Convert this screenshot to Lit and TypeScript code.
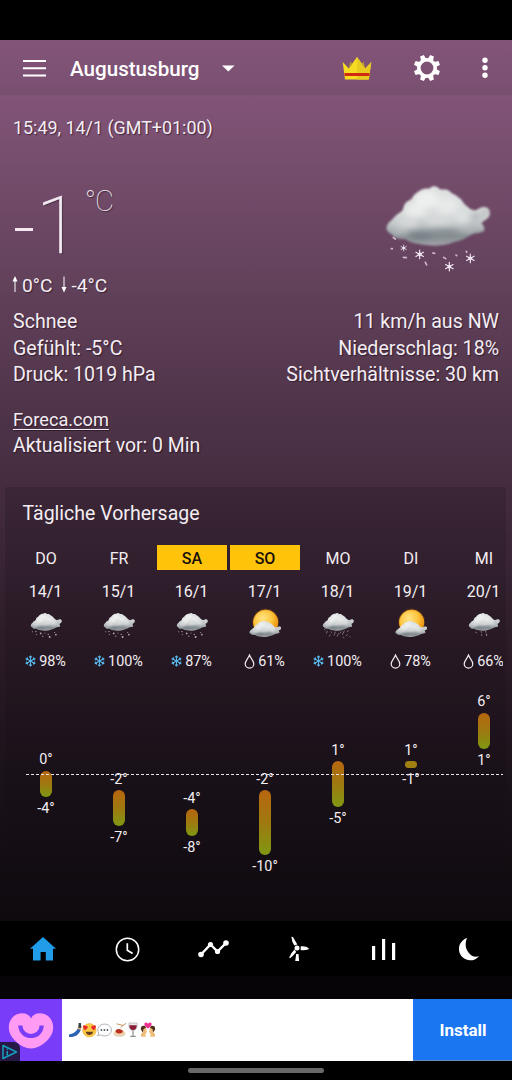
import { LitElement, html, css, svg } from "lit";
import { customElement, property } from "lit/decorators.js";

type Sky = "snow" | "rain" | "sun" | "sleet";
interface Day {
  name: string;
  date: string;
  sky: Sky;
  wet: "flake" | "drop";
  chance: number;
  high: number;
  low: number;
  weekend?: boolean;
}

const DAYS: Day[] = [
  { name: "DO", date: "14/1", sky: "snow", wet: "flake", chance: 98, high: 0, low: -4 },
  { name: "FR", date: "15/1", sky: "snow", wet: "flake", chance: 100, high: -2, low: -7 },
  { name: "SA", date: "16/1", sky: "snow", wet: "flake", chance: 87, high: -4, low: -8, weekend: true },
  { name: "SO", date: "17/1", sky: "sun", wet: "drop", chance: 61, high: -2, low: -10, weekend: true },
  { name: "MO", date: "18/1", sky: "sleet", wet: "flake", chance: 100, high: 1, low: -5 },
  { name: "DI", date: "19/1", sky: "sun", wet: "drop", chance: 78, high: 1, low: -1 },
  { name: "MI", date: "20/1", sky: "rain", wet: "drop", chance: 66, high: 6, low: 1 },
];

const PX_PER_DEGREE = 9.65;

const flake = (x: number, y: number, r: number) => svg`
  <g transform="translate(${x} ${y})" stroke="#f3e6f3" stroke-width=${r * 0.26} stroke-linecap="round">
    ${[0, 60, 120].map(
      (a) => svg`<path transform="rotate(${a})" d="M0 ${-r}V${r}" fill="none"/>`
    )}
    <circle r=${r * 0.42} fill="#f3e6f3" stroke="none"/>
  </g>`;

@customElement("sky-icon")
export class SkyIcon extends LitElement {
  @property() sky: Sky = "snow";
  @property({ type: Boolean }) small = false;

  static styles = css`
    :host { display: block; }
    svg { display: block; width: 100%; height: 100%; overflow: visible; }
  `;

  cloud() {
    const d =
      "M48 172C52 158 62 154 68 146C74 136 84 131 92 126C98 122 98 112 102 104C108 94 118 94 124 86C130 74 140 68 150 62C158 54 170 60 180 54C188 46 200 50 207 58C214 62 226 56 236 64C244 74 256 74 264 84C274 88 276 98 284 106C292 112 298 120 310 122C320 122 326 114 338 112C350 110 360 120 357 134C357 146 342 152 332 160C338 166 344 176 340 184C330 192 312 188 300 196C286 206 268 214 248 218C224 228 196 230 168 226C142 224 120 220 104 208C86 208 66 206 64 194C54 190 46 182 48 172Z";
    return svg`
      <defs>
        <linearGradient id="body" x1="0" y1="0" x2="0" y2="1">
          <stop offset="0" stop-color="#dfe1e1"/><stop offset=".46" stop-color="#d9dcdc"/>
          <stop offset=".66" stop-color="#bcc1c3"/><stop offset=".84" stop-color="#858d92"/>
          <stop offset="1" stop-color="#a3a4aa"/>
        </linearGradient>
        <clipPath id="shape"><path d=${d}/></clipPath>
        <filter id="edge" x="-10%" y="-10%" width="120%" height="120%"><feGaussianBlur stdDeviation="2.6"/></filter>
        <filter id="puff" x="-60%" y="-60%" width="220%" height="220%"><feGaussianBlur stdDeviation="9"/></filter>
      </defs>
      <g filter="url(#edge)">
        <path d=${d} fill="url(#body)"/>
        <g clip-path="url(#shape)"><g filter="url(#puff)">
          <ellipse cx="168" cy="88" rx="36" ry="24" fill="#eff0f0"/>
          <ellipse cx="135" cy="122" rx="34" ry="20" fill="#ebecec"/>
          <ellipse cx="228" cy="108" rx="34" ry="24" fill="#e8eaea"/>
          <ellipse cx="110" cy="160" rx="36" ry="12" fill="#d9dcdc"/>
          <ellipse cx="204" cy="152" rx="46" ry="12" fill="#d9dcdc"/>
          <ellipse cx="275" cy="144" rx="22" ry="17" fill="#dfe2e2"/>
          <ellipse cx="313" cy="140" rx="13" ry="7" fill="#989ea3"/>
          <ellipse cx="344" cy="128" rx="12" ry="13" fill="#b5b8bb"/>
          <ellipse cx="84" cy="184" rx="28" ry="11" fill="#b6bcbe"/>
          <ellipse cx="150" cy="198" rx="36" ry="10" fill="#727d83"/>
          <ellipse cx="220" cy="190" rx="44" ry="10" fill="#828b90"/>
          <ellipse cx="298" cy="177" rx="26" ry="9" fill="#b2b7ba"/>
        </g></g>
      </g>`;
  }

  fall() {
    if (this.sky === "snow" && this.small) {
      return svg`<g fill="#b3a9b4">
        <circle cx="64" cy="238" r="5"/><circle cx="99" cy="236" r="7"/><circle cx="147" cy="254" r="9"/>
        <circle cx="104" cy="264" r="5"/><circle cx="168" cy="282" r="6"/><circle cx="190" cy="250" r="5"/>
        <circle cx="236" cy="290" r="10"/><circle cx="222" cy="264" r="6"/><circle cx="299" cy="266" r="9"/><circle cx="287" cy="246" r="5"/></g>`;
    }
    if (this.sky === "snow") {
      return svg`
        ${flake(99, 235, 9)}${flake(147, 254, 13)}${flake(236, 291, 13)}${flake(299, 266, 13)}
        <g fill="none" stroke="#cfb8cb" stroke-width="5" stroke-linecap="round">
          <path d="M68 204l6 4M62 237h3M98 263l9 1M164 278l4 8M186 250l6 1M219 263l6 4M256 256l2 2M287 245l1 3"/>
        </g>`;
    }
    if (this.sky === "sleet") {
      return svg`<g stroke="#b0a3af" stroke-width="6" stroke-linecap="round" fill="none">
        <path d="M64 214l5 6M92 231l-5 20M128 238l9 8M122 269l-8 12M173 240l-12 31M206 256l-14 26M230 238l-8 13M262 229l-16 35M302 226l-8 12M294 268l-10 8M320 287l4 4M254 291l5 8"/></g>`;
    }
    return svg`<g stroke="#9c929b" stroke-width="9" stroke-linecap="round" fill="none">
      <path d="M120 242l3 6M172 236l3 7M175 266l3 8M224 260l4 17M216 236l2 5"/></g>`;
  }

  render() {
    if (this.sky === "sun") {
      return html`<svg viewBox="40 40 330 270">
        <defs><radialGradient id="sun" cx=".38" cy=".34" r=".65">
          <stop offset="0" stop-color="#ffe483"/><stop offset=".6" stop-color="#fcc43e"/><stop offset="1" stop-color="#eb920f"/>
        </radialGradient></defs>
        <circle cx="206" cy="140" r="134" fill="#e78b13" opacity=".18"/>
        <circle cx="206" cy="142" r="122" fill="url(#sun)" stroke="#ffaf1c" stroke-width="8"/>
        <g transform="translate(-4 84) scale(1.02 .9)">${this.cloud()}</g>
      </svg>`;
    }
    return html`<svg viewBox="40 40 330 270">${this.cloud()}${this.fall()}</svg>`;
  }
}

@customElement("day-column")
export class DayColumn extends LitElement {
  @property({ attribute: false }) day!: Day;

  static styles = css`
    :host { display: flex; flex-direction: column; align-items: center; width: 70px; flex: none; color: #f3eef2; }
    .name { width: 70px; height: 25px; line-height: 27px; text-align: center; font-size: 16px; }
    .weekend { background: #ffc409; color: #17100a; font-weight: 500; }
    .date { height: 18px; line-height: 18px; margin-top: 13px; font-size: 16px; padding-right: 1px; }
    .sky { width: 33px; height: 27px; margin-top: 11px; }
    .chance { display: flex; align-items: center; justify-content: center; gap: 3px; height: 18px; margin-top: 14px; font-size: 14.4px; white-space: nowrap; padding-right: 1px; }
    .chance svg { display: block; flex: none; }
    .flake { margin-bottom: 1px; }
    .range { display: flex; flex-direction: column; align-items: center; height: 240px; }
    .deg { height: 16px; line-height: 16px; font-size: 14.4px; white-space: nowrap; }
    .bar { width: 12px; margin: 2.5px 0 4px; border-radius: 6px; background: linear-gradient(#b8660f, #9d7a10 52%, #7f9812); flex: none; }
    .short { background: #a18012; }
  `;

  render() {
    const d = this.day;
    const span = d.high - d.low;
    return html`
      <div class="name ${d.weekend ? "weekend" : ""}">${d.name}</div>
      <div class="date">${d.date}</div>
      <sky-icon class="sky" small .sky=${d.sky}></sky-icon>
      <div class="chance">
        ${d.wet === "flake"
          ? html`<svg class="flake" width="11" height="12" viewBox="-6 -6.5 12 13" fill="none" stroke="#58b7ec" stroke-width="1.1">
              ${[0, 60, 120].map((a) => svg`<path transform="rotate(${a})" d="M0-6V6M-1.6-5L0-3.4L1.6-5M-1.6 5L0 3.4L1.6 5"/>`)}
            </svg>`
          : html`<svg width="11" height="15" viewBox="0 0 11 15" fill="none" stroke="#f3eef2" stroke-width="1.2">
              <path d="M5.5 1C4.7 3.8 1.2 7 1.2 10A4.3 4.1 0 0 0 9.8 10C9.8 7 6.3 3.8 5.5 1Z"/>
            </svg>`}
        <span>${d.chance}%</span>
      </div>
      <div class="range" style="padding-top:${82.3 - PX_PER_DEGREE * d.high}px">
        <div class="deg">${d.high}°</div>
        <div class="bar ${span < 3 ? "short" : ""}" style="height:${PX_PER_DEGREE * span - 12.3}px"></div>
        <div class="deg">${d.low}°</div>
      </div>`;
  }
}

@customElement("app-root")
export class AppRoot extends LitElement {
  static styles = css`
    :host { display: flex; flex-direction: column; width: 512px; height: 1080px; overflow: hidden; background: #000; color: #f4edf3; font-family: Roboto, sans-serif; }
    * { box-sizing: border-box; }
    svg { display: block; flex: none; }
    .status { height: 40px; flex: none; }
    .top { height: 55px; flex: none; display: flex; align-items: center; padding: 1px 24px 0 22px; background: linear-gradient(#835579, #794f70); }
    .city { margin-left: 23px; font-size: 20.6px; font-weight: 500; color: #fff; line-height: 28px; padding-top: 1px; }
    .caret { margin-left: 23px; }
    .crown { margin-left: auto; }
    .gear { margin-left: 41px; }
    .more { margin-left: 41px; }
    .main { height: 826px; flex: none; display: flex; flex-direction: column; background: linear-gradient(#825478 0, #754d6c 9%, #5f3f58 25%, #452d3f 47%, #2c1c28 66%, #1b121a 82%, #0e0a0e 100%); }
    .now { height: 392px; padding: 21px 13px 0; text-shadow: 1px 1px 1px rgba(20, 5, 20, 0.55); }
    .time { height: 24px; line-height: 24px; font-size: 17.9px; }
    .hero { display: flex; justify-content: space-between; height: 133px; }
    .reading { display: flex; padding-top: 39px; font-weight: 100; }
    .num { font-size: 80px; line-height: 94px; display: flex; }
    .minus { width: 18px; height: 2.5px; margin-top: 49px; margin-left: 2px; background: #f4e8f2; }
    .one { margin-left: 3px; -webkit-text-stroke: 0.6px #f4e8f2; }
    .unit { font-size: 29.5px; line-height: 36px; padding-top: 4px; margin-left: 5px; letter-spacing: -1.2px; }
    .big { width: 110px; height: 90px; margin: 43px 5px 0 0; }
    .minmax { display: flex; align-items: center; height: 24px; font-size: 19.2px; line-height: 25px; }
    .minmax svg { margin-bottom: 2px; margin-left: -1px; }
    .minmax span { margin-left: 4px; }
    .minmax .down { margin-left: 9px; }
    .facts { display: flex; justify-content: space-between; margin-top: 12px; line-height: 26.6px; font-size: 19.6px; }
    .right { text-align: right; }
    .source { margin-top: 18px; line-height: 26px; font-size: 19.4px; }
    .link { font-size: 18.2px; text-decoration: underline; text-decoration-thickness: 1px; text-underline-offset: 3px; }
    .panel { margin: 0 6px 0 5px; height: 428px; border-radius: 2px; background: linear-gradient(rgba(12, 6, 14, 0.17), rgba(12, 6, 14, 0.14) 60%, rgba(12, 6, 14, 0)); padding: 13px 3px 0 6px; }
    .title { font-size: 19.5px; line-height: 28px; padding-left: 11.5px; }
    .days { display: flex; gap: 3px; margin-top: 17px; overflow: hidden; position: relative; height: 365px; }
    .zero { position: absolute; left: 15px; top: 229px; width: 477px; height: 1px; background: repeating-linear-gradient(90deg, #e9e4e8 0 3px, transparent 3px 5px); }
    .nav { height: 55px; flex: none; display: flex; align-items: center; }
    .nav div { flex: 1; display: flex; justify-content: center; padding-top: 1px; }
    .gap { height: 23px; flex: none; background: #060406; }
    .ad { height: 62px; flex: none; display: flex; background: #fff; }
    .logo { position: relative; width: 62px; background: #793cf8; }
    .choice { position: absolute; left: 0; bottom: 0; }
    .emoji { flex: 1; display: flex; align-items: center; padding-left: 6px; }
    .install { width: 99px; display: flex; align-items: center; justify-content: center; background: #1b76f2; color: #fff; font-weight: 700; font-size: 17px; padding-left: 1px; border-bottom: 1px solid #668cc0; }
    .home { width: 136px; height: 5px; margin: 7px auto 0; border-radius: 3px; background: #686868; }
  `;

  emoji() {
    return html`<svg width="88" height="16" viewBox="0 0 88 16">
      <path d="M1 12.4C5 11.8 8 9.8 10 6.2L13 7.2C11 13 7 15.4 1 15Z" fill="#2e62b3"/>
      <path d="M9.5 6.5L11 2.5L14 4L12.6 8Z" fill="#e8b36c"/><rect x="10.5" y="1" width="2.6" height="5" rx=".6" fill="#31424d"/>
      <circle cx="21.4" cy="8.2" r="6.7" fill="#fcc943" stroke="#e79c28" stroke-width=".5"/>
      <path d="M15.3 3.6c1.1-1 2 0 2.2.4 1.5-.6 2.7.6 2 2L17.2 8.6C15.5 7 14.4 5.2 15.3 3.6ZM27.6 3.6c-1.1-1-2 0-2.2.4-1.5-.6-2.7.6-2 2l2.3 2.6c1.7-1.6 2.8-3.4 1.9-5Z" fill="#e52c2f"/>
      <path d="M17.8 9.7h7.2c-.5 4.3-6.7 4.3-7.2 0Z" fill="#633c21"/>
      <path d="M36.5 2.1c4 0 6.8 2.5 6.8 6s-2.8 5.8-6.8 5.8c-1.6 0-3-.4-4.2-1.1l-2.7 1.1 1-2.8c-2-3.7.2-9 5.9-9Z" fill="#fff" stroke="#999fa3" stroke-width=".8"/>
      <g fill="#47545b"><circle cx="33.4" cy="8" r=".9"/><circle cx="36.4" cy="8" r=".9"/><circle cx="39.4" cy="8" r=".9"/></g>
      <ellipse cx="51.5" cy="11.7" rx="6" ry="3.1" fill="#e6d3bd"/><ellipse cx="51.5" cy="10.2" rx="5" ry="2.7" fill="#efd0a0"/>
      <path d="M47.5 9c1.5-3 5.5-2.4 7.2 0 1 2.6-6.2 4-7.2 0Z" fill="#b92e20"/><path d="M52.5 5.5L55.3 3.2 58 1.3M48.5 1.8l7 1.7" stroke="#c29a68" fill="none"/>
      <path d="M61 1h8c.6 4-.6 7.4-4 7.4S60.4 5 61 1Z" fill="#e5e8ea" stroke="#a4a8aa" stroke-width=".6"/>
      <path d="M61.3 3.3h7.4C68.7 6.3 67.4 8 65 8s-3.7-1.7-3.7-4.7Z" fill="#8b1c35"/>
      <path d="M65 8.5V14M62.3 14.4h5.4" stroke="#8c9194" stroke-width="1.2"/>
      <path d="M80 6.5C75.5 3.9 75.7.8 77.7.6 79 .4 79.8 1.5 80 2c.2-.5 1-1.6 2.3-1.4 2 .2 2.2 3.3-2.3 5.9Z" fill="#f0308f"/>
      <path d="M73 14.8V12l2-2-1.5-4.6 4.2-.7 1.2 5.3-1.6 2.6.6 2.2Z" fill="#eebd78"/>
      <path d="M72.8 7.2c-.4-4 4.4-4.4 5.2-1.6l-2.6 1.7-.6 3.2Z" fill="#4f2e20"/>
      <path d="M87 14.8V12l-2-2 1.5-4.6-4.2-.7-1.2 5.3 1.6 2.6-.6 2.2Z" fill="#eebd78"/>
      <path d="M87.2 7.2c.4-4-4.4-4.4-5.2-1.6l2.6 1.7.6 3.2Z" fill="#4f2e20"/>
    </svg>`;
  }

  render() {
    return html`
      <div class="status"></div>
      <header class="top">
        <svg width="25" height="17" viewBox="0 0 25 17" fill="#fff"><path d="M1 0h23v2H1zM1 7.3h23v2H1zM1 14.6h23v2H1z"/></svg>
        <div class="city">Augustusburg</div>
        <svg class="caret" width="13" height="7" viewBox="0 0 13 7"><path d="M0 .5h12.6L6.3 6.5z" fill="#fff"/></svg>
        <svg class="crown" width="30" height="24" viewBox="0 0 30 24">
          <path d="M.7 6l6 6.5L15 1l8.3 11.5 6-6.5-2.5 17.5H3z" fill="#f6dc22"/>
          <path d="M15 1l8.300 11.500 6-6.500-2.500 17.500H15z" fill="#e9cb20"/>
          <path d="M6.700 12.500L8.500 5.500 10.300 8.200zM23.300 12.500L21.500 5.500 19.700 8.200z" fill="#b9a126"/>
          <path d="M2.300 17h25.400l-.4 3H2.700z" fill="#d12a13"/>
        </svg>
        <svg class="gear" width="28" height="28" viewBox="-14 -14 28 28">
          <circle r="8.200" fill="none" stroke="#fff" stroke-width="3.600"/>
          ${[22.5, 67.5, 112.5, 157.5, 202.5, 247.5, 292.5, 337.5].map(
            (a) => svg`<path transform="rotate(${a})" d="M-2.7-9L-2-13.2H2L2.7-9z" fill="#fff"/>`
          )}
        </svg>
        <svg class="more" width="6" height="22" viewBox="0 0 6 22" fill="#fff"><circle cx="3" cy="3.300" r="2.700"/><circle cx="3" cy="10.800" r="2.700"/><circle cx="3" cy="18.300" r="2.700"/></svg>
      </header>
      <main class="main">
        <section class="now">
          <div class="time">15:49, 14/1 (GMT+01:00)</div>
          <div class="hero">
            <div class="reading">
              <div class="num"><div class="minus"></div><div class="one">1</div></div>
              <div class="unit">°C</div>
            </div>
            <sky-icon class="big" .sky=${"snow"}></sky-icon>
          </div>
          <div class="minmax">
            <svg width="6" height="17" viewBox="0 0 6 17"><path d="M3 0l2.500 5.500h-5z" fill="#fff"/><path d="M3 4v12" stroke="#fff"/></svg>
            <span>0°C</span>
            <svg class="down" width="6" height="17" viewBox="0 0 6 17"><path d="M3 16.500L.5 11h5z" fill="#fff"/><path d="M3 .5v12" stroke="#fff"/></svg>
            <span>-4°C</span>
          </div>
          <div class="facts">
            <div>Schnee<br />Gefühlt: -5°C<br />Druck: 1019 hPa</div>
            <div class="right">11 km/h aus NW<br />Niederschlag: 18%<br />Sichtverhältnisse: 30 km</div>
          </div>
          <div class="source"><span class="link">Foreca.com</span><br />Aktualisiert vor: 0 Min</div>
        </section>
        <section class="panel">
          <div class="title">Tägliche Vorhersage</div>
          <div class="days">
            ${DAYS.map((d) => html`<day-column .day=${d}></day-column>`)}
            <div class="zero"></div>
          </div>
        </section>
      </main>
      <nav class="nav">
        <div><svg width="26" height="24" viewBox="0 0 26 24"><path d="M13 0l13 11.700h-3V23.500h-7.200V15h-5.200v8.500H3V11.700H0z" fill="#209ce8"/></svg></div>
        <div><svg width="25" height="25" viewBox="0 0 25 25" fill="none" stroke="#fff"><circle cx="12.500" cy="12.500" r="11.200" stroke-width="1.500"/><path d="M12.300 6.200v7l5.300 3.300" stroke-width="1.700"/></svg></div>
        <div><svg width="31" height="18" viewBox="0 0 31 18" fill="#fff"><path d="M3 14.500L12.500 4.500 19.500 11.500 28 3" fill="none" stroke="#fff" stroke-width="2.400"/><circle cx="3" cy="14.500" r="2.800"/><circle cx="12.500" cy="4.500" r="2.600"/><circle cx="19.500" cy="11.500" r="2.600"/><circle cx="28" cy="3" r="2.800"/></svg></div>
        <div><svg width="21" height="26" viewBox="-1 0 21 26" fill="#fff"><circle cx="8" cy="12" r="2.500"/><path d="M2.400.8Q3.600.3 4.300 1.500L8.300 8.600 5.300 9.600Q2.800 6 2.400.8ZM11.800 10.300Q17 9.700 19.800 12.300 19.800 13.400 19 13.600 15 14.700 11.600 14ZM7.200 18h2.300L10.100 25H6.200ZM5.500 13.500L7.200 16Q4 20 1 22.300L.2 21.500Q1.800 17 5.500 13.500Z"/></svg></div>
        <div><svg width="24" height="24" viewBox="0 0 24 24" fill="#fff"><path d="M0 9h3.200v14H0zM10 2h3.200v21H10zM20 6h3.200v17H20z"/></svg></div>
        <div><svg width="20" height="23" viewBox="0 0 20 23"><path d="M8 0A11.400 11.400 0 1 0 20 18.300Q13.500 20.200 9.500 14.500C6 10 6 4.500 8 0Z" fill="#fff"/></svg></div>
      </nav>
      <div class="gap"></div>
      <section class="ad">
        <div class="logo">
          <svg width="62" height="62" viewBox="0 0 62 62"><path d="M31 19.500C33 14 42 12.500 48 17C54 22 55 31 50 38C46 44 38 49.500 31 49.500C24 49.500 16 44 12 38C7 31 8 22 14 17C20 12.500 29 14 31 19.500Z" fill="#ff9bf3"/><path d="M20.300 26.500C21 40.500 41 40.500 41.700 26.500" fill="none" stroke="#793cf8" stroke-width="4.200"/></svg>
          <svg class="choice" width="20" height="19" viewBox="0 0 20 19"><path d="M0 0h14a6 6 0 0 1 6 6v13H0z" fill="#261946"/><path d="M3 3.500v13L16.500 10z" fill="none" stroke="#169fbd" stroke-width="1.500" stroke-linejoin="round"/><path d="M7.300 9v4.500M7.300 6.500v1.300" stroke="#169fbd" stroke-width="1.500"/></svg>
        </div>
        <div class="emoji">${this.emoji()}</div>
        <div class="install">Install</div>
      </section>
      <div class="home"></div>
    `;
  }
}
